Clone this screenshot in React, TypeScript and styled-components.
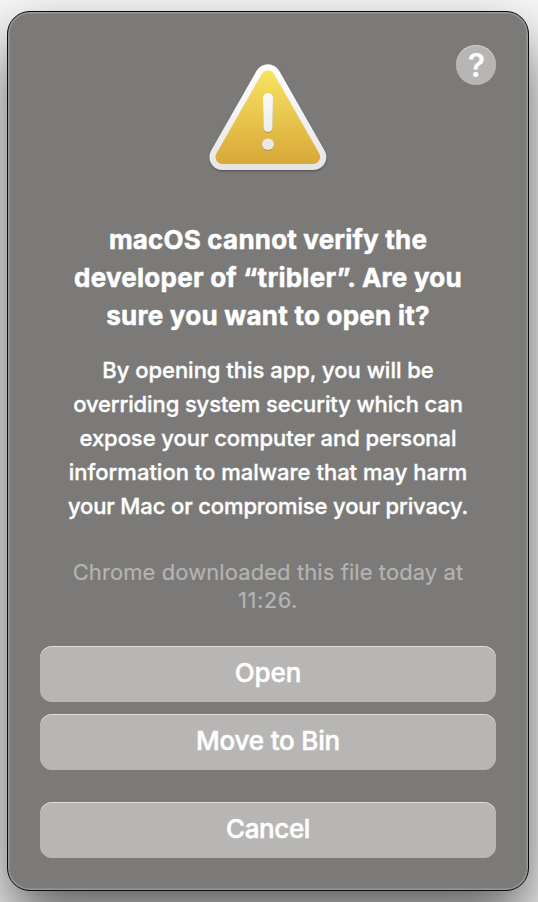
import React from 'react';
import styled, { createGlobalStyle } from 'styled-components';

const GlobalStyle = createGlobalStyle`
  * { box-sizing: border-box; }
  body {
    margin: 0;
    font-family: Inter, "Liberation Sans", sans-serif;
  }
`;

const Desktop = styled.main`
  width: 538px;
  height: 902px;
  padding: 11px 9px 11px 7px;
  overflow: hidden;
  background: #f7f7f7;
`;

const Dialog = styled.section`
  display: flex;
  flex-direction: column;
  align-items: center;
  width: 522px;
  height: 880px;
  padding: 33px 32px 32px;
  border: 1px solid #0c0c0c;
  border-radius: 23px;
  background: #7b7a78;
  box-shadow:
    inset 0 0 0 1.5px #989896,
    0 30px 60px rgba(0, 0, 0, 0.62);
`;

const Header = styled.header`
  display: grid;
  grid-template-columns: 1fr 120px 1fr;
  align-items: start;
  width: 100%;
`;

const WarningIcon = styled.svg`
  grid-column: 2;
  display: block;
  width: 120px;
  height: 114px;
  margin-top: 17px;
  overflow: visible;
`;

const HelpButton = styled.button`
  justify-self: end;
  display: flex;
  align-items: center;
  justify-content: center;
  width: 40px;
  height: 40px;
  padding: 2px 0 0 1px;
  border: 0;
  border-radius: 50%;
  background: #b7b6b4;
  box-shadow: inset 0 1px 0 #d0cfce;
  color: #fff;
  font: 600 32px/40px Inter, "Liberation Sans", sans-serif;
`;

const Title = styled.h1`
  margin: 45px 0 0;
  color: #fff;
  font-size: 26px;
  font-weight: 700;
  line-height: 38px;
  text-align: center;
  -webkit-text-stroke: 0.5px #fff;
`;

const Message = styled.p`
  margin: 18px 0 0;
  color: #fff;
  font-size: 22px;
  font-weight: 500;
  line-height: 34px;
  text-align: center;
  -webkit-text-stroke: 0.35px #fff;
`;

const Origin = styled.p`
  margin: 35px 0 0;
  color: #b5b4b2;
  font-size: 22px;
  font-weight: 400;
  line-height: 28px;
  text-align: center;
  -webkit-text-stroke: 0.2px #b5b4b2;
`;

const Line = styled.span<{ $tracking: number }>`
  display: block;
  white-space: nowrap;
  letter-spacing: ${({ $tracking }) => $tracking}px;
`;

const Actions = styled.div`
  display: flex;
  flex-direction: column;
  gap: 12px;
  width: 456px;
  margin-top: 32px;
`;

const ActionButton = styled.button<{ $tracking?: number; $separated?: boolean }>`
  height: 56px;
  margin: ${({ $separated }) => ($separated ? '20px 0 0' : '0')};
  padding: 0 0 2px;
  border: 0;
  border-radius: 12px;
  background: #b7b6b4;
  box-shadow: inset 0 1px 0 #dddcdb;
  color: #fff;
  font: 500 26px/32px Inter, "Liberation Sans", sans-serif;
  letter-spacing: ${({ $tracking = 0 }) => $tracking}px;
  -webkit-text-stroke: 0.5px #fff;
`;

type TextLine = [text: string, tracking: number];

const titleLines: TextLine[] = [
  ['macOS cannot verify the', 0.19],
  ['developer of “tribler”. Are you', 0.25],
  ['sure you want to open it?', 0.24],
];

const messageLines: TextLine[] = [
  ['By opening this app, you will be', -0.02],
  ['overriding system security which can', -0.12],
  ['expose your computer and personal', -0.06],
  ['information to malware that may harm', 0],
  ['your Mac or compromise your privacy.', -0.13],
];

const originLines: TextLine[] = [
  ['Chrome downloaded this file today at', 0.08],
  ['11:26.', 0.5],
];

const Lines = ({ lines }: { lines: TextLine[] }) => (
  <>
    {lines.map(([text, tracking]) => (
      <Line key={text} $tracking={tracking}>{text} </Line>
    ))}
  </>
);

const Warning = () => (
  <WarningIcon viewBox="0 0 120 114" role="img" aria-label="Warning">
    <defs>
      <linearGradient id="rim" gradientUnits="userSpaceOnUse" x1="0" y1="2" x2="0" y2="108">
        <stop offset="0" stopColor="#ffffff" />
        <stop offset="1" stopColor="#e5e5e6" />
      </linearGradient>
      <linearGradient id="gold" gradientUnits="userSpaceOnUse" x1="0" y1="8" x2="0" y2="102">
        <stop offset="0" stopColor="#f8e363" />
        <stop offset="1" stopColor="#d8a838" />
      </linearGradient>
      <linearGradient id="mark" gradientUnits="userSpaceOnUse" x1="0" y1="30" x2="0" y2="90">
        <stop offset="0" stopColor="#fafafa" />
        <stop offset="1" stopColor="#e6e6e7" />
      </linearGradient>
      <filter id="drop" filterUnits="userSpaceOnUse" x="-10" y="-10" width="140" height="134">
        <feDropShadow dx="0" dy="1.2" stdDeviation="1.1" floodColor="#000" floodOpacity="0.35" />
      </filter>
      <filter id="markShadow" filterUnits="userSpaceOnUse" x="45" y="20" width="30" height="80">
        <feDropShadow dx="0" dy="0.8" stdDeviation="0.5" floodColor="#80661a" floodOpacity="0.6" />
      </filter>
    </defs>
    <path
      d="M59.9 15.2 105.2 95H14.5Z"
      fill="url(#rim)" stroke="url(#rim)" strokeWidth="26" strokeLinejoin="round" filter="url(#drop)"
    />
    <path
      d="M59.9 15.2 105.2 95H14.5Z"
      fill="url(#gold)" stroke="url(#gold)" strokeWidth="14" strokeLinejoin="round"
    />
    <g fill="url(#mark)" filter="url(#markShadow)">
      <path d="M55 36a5 5 0 0 1 10 0L64.3 65.700a4.300 4.300 0 0 1-8.600 0Z" />
      <ellipse cx="60" cy="82.200" rx="6" ry="5.600" />
    </g>
  </WarningIcon>
);

export default function App() {
  return (
    <>
      <GlobalStyle />
      <Desktop>
        <Dialog role="alertdialog">
          <Header>
            <Warning />
            <HelpButton type="button" aria-label="Help">?</HelpButton>
          </Header>
          <Title><Lines lines={titleLines} /></Title>
          <Message><Lines lines={messageLines} /></Message>
          <Origin><Lines lines={originLines} /></Origin>
          <Actions>
            <ActionButton type="button" $tracking={-0.1}>Open</ActionButton>
            <ActionButton type="button" $tracking={-0.2}>Move to Bin</ActionButton>
            <ActionButton type="button" $tracking={-0.4} $separated>Cancel</ActionButton>
          </Actions>
        </Dialog>
      </Desktop>
    </>
  );
}
